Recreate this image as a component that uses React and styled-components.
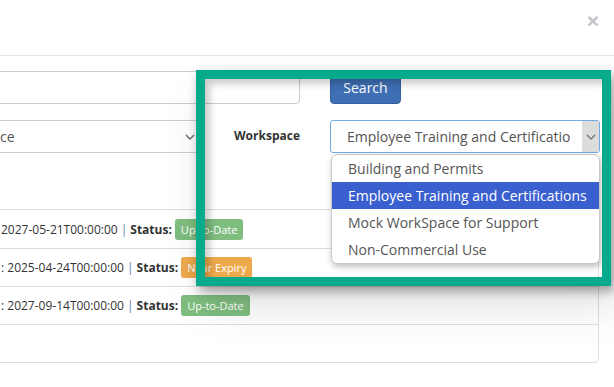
import styled, { createGlobalStyle } from 'styled-components';

const GlobalStyle = createGlobalStyle`
    html, body {
        margin: 0;
        padding: 0;
        background: #fff;
    }
    body {
        font-family: "Open Sans", "Liberation Sans", sans-serif;
        color: #333;
        overflow: hidden;
    }
`

const Modal = styled.div`
    position: relative;
    width: 614px;
    height: 387px;
    overflow: hidden;
    background: #fff;
`
const Header = styled.div`
    height: 55px;
    border-bottom: 1px solid #e5e5e5;
    display: flex;
    justify-content: flex-end;
    align-items: flex-start;
`
const Close = styled.span`
    margin: 7px 15px 0 0;
    font-family: "Liberation Sans", Arial, sans-serif;
    font-size: 21px;
    font-weight: bold;
    line-height: 28px;
    color: #c4c4c4;
`
const Body = styled.div`
    padding-top: 15px;
`
const FormRow = styled.div`
    display: grid;
    grid-template-columns: 320px 270px;
    column-gap: 30px;
    margin-left: -20px;
    margin-top: ${(props) => props.$top || 0}px;
`
const Input = styled.div`
    height: 33px;
    box-sizing: border-box;
    border: 1px solid #ccc;
    border-radius: 4px;
`
const Button = styled.div`
    width: 71px;
    height: 33px;
    box-sizing: border-box;
    background: #3e6fb4;
    border: 1px solid #33609f;
    border-radius: 4px;
    color: #fff;
    font-size: 14px;
    display: flex;
    align-items: center;
    justify-content: center;
`
const LeftGroup = styled.div`
    display: flex;
    align-items: center;
    justify-content: space-between;
`
const Select = styled.div`
    width: 220px;
    height: 33px;
    box-sizing: border-box;
    border: 1px solid #ccc;
    border-radius: 4px;
    display: flex;
    align-items: center;
    justify-content: space-between;
    padding: 0 4px 0 19px;
    font-size: 14px;
    color: #555;
`
const Label = styled.div`
    font-size: 12px;
    font-weight: bold;
    color: #333;
    margin-bottom: 2px;
`
const WorkspaceSelect = styled.div`
    position: relative;
    height: 33px;
    box-sizing: border-box;
    border: 1px solid #71ace6;
    border-radius: 3px;
    display: flex;
    align-items: stretch;
    font-size: 14px;
    color: #555;
`
const SelectText = styled.div`
    flex: 1;
    white-space: nowrap;
    padding: 0 8px 0 16px;
    line-height: 31px;
`
const Arrow = styled.div`
    width: 17px;
    background: #dcdcdc;
    display: flex;
    align-items: center;
    justify-content: center;
`
const Dropdown = styled.div`
    position: absolute;
    top: 33px;
    left: 0;
    right: -1px;
    background: #fff;
    border: 1px solid #c8c8c8;
    border-radius: 6px;
    box-shadow: 1px 3px 6px rgba(0, 0, 0, 0.25);
    overflow: hidden;
    z-index: 2;
`
const Option = styled.div`
    height: 27px;
    line-height: 27px;
    padding-left: 16px;
    white-space: nowrap;
    font-size: 14px;
    color: ${(props) => (props.$active ? '#fff' : '#555')};
    background: ${(props) => (props.$active ? '#3a5fcf' : 'transparent')};
`
const List = styled.div`
    margin: 56px 0 0 -20px;
    width: 619px;
    box-sizing: border-box;
    border: 1px solid #dedede;
    border-radius: 4px;
`
const Item = styled.div`
    height: 38px;
    box-sizing: border-box;
    border-top: ${(props) => (props.$first ? 'none' : '1px solid #dedede')};
    padding-left: 20px;
    display: flex;
    align-items: center;
    white-space: nowrap;
    font-size: 12px;
    color: #333;
`
const Sep = styled.span`
    color: #5a7db4;
    margin: 0 3px;
`
const Strong = styled.b`
    margin-right: 3px;
`
const Badge = styled.span`
    display: inline-block;
    height: 21px;
    line-height: 21px;
    padding: 0 6px;
    border-radius: 3px;
    font-size: 11px;
    color: #fff;
    background: ${(props) => props.$color};
`
const Highlight = styled.div`
    position: absolute;
    left: 196px;
    top: 70px;
    width: 415px;
    height: 216px;
    box-sizing: border-box;
    border: 9px solid #07aa8b;
    box-shadow: 3px 5px 10px rgba(0, 0, 0, 0.35), 10px 20px 40px rgba(0, 0, 0, 0.12), inset 5px 5px 7px rgba(0, 0, 0, 0.2);
    pointer-events: none;
    z-index: 5;
`

const Chevron = ({ color = '#666' }) => (
    <svg width="10" height="6" viewBox="0 0 10 6">
        <polyline points="1,1 5,5 9,1" fill="none" stroke={color} strokeWidth="1.3" />
    </svg>
)

const rows = [
    { text: '2027-05-21T00:00:00', status: 'Up-to-Date', color: '#7fbd7f' },
    { text: ': 2025-04-24T00:00:00', status: 'Near Expiry', color: '#eda94c' },
    { text: ': 2027-09-14T00:00:00', status: 'Up-to-Date', color: '#7fbd7f' },
]

const options = [
    'Building and Permits',
    'Employee Training and Certifications',
    'Mock WorkSpace for Support',
    'Non-Commercial Use',
]

const App = () => {
    return (
        <Modal>
            <GlobalStyle />
            <Header>
                <Close>×</Close>
            </Header>
            <Body>
                <FormRow>
                    <Input />
                    <Button>Search</Button>
                </FormRow>
                <FormRow $top={16}>
                    <LeftGroup>
                        <Select>
                            <span>ce</span>
                            <Chevron />
                        </Select>
                        <Label>Workspace</Label>
                    </LeftGroup>
                    <WorkspaceSelect>
                        <SelectText>Employee Training and Certificatio</SelectText>
                        <Arrow>
                            <Chevron color="#777" />
                        </Arrow>
                        <Dropdown>
                            {options.map((opt) => (
                                <Option key={opt} $active={opt === 'Employee Training and Certifications'}>{opt}</Option>
                            ))}
                        </Dropdown>
                    </WorkspaceSelect>
                </FormRow>
                <List>
                    {rows.map((row, i) => (
                        <Item key={i} $first={i === 0}>
                            {row.text}
                            <Sep>|</Sep>
                            <Strong>Status:</Strong>
                            <Badge $color={row.color}>{row.status}</Badge>
                        </Item>
                    ))}
                    <Item />
                </List>
            </Body>
            <Highlight />
        </Modal>
    )
}

export default App;
